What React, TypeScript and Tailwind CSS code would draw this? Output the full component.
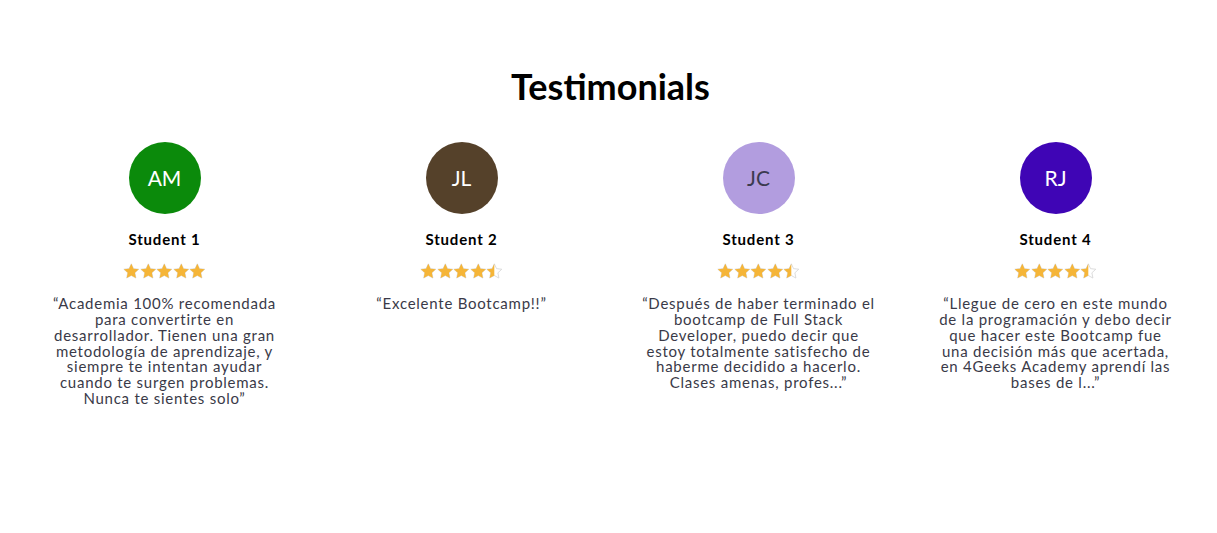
import React from "react";

type T = { initials: string; bg: string; fg: string; name: string; rating: number; text: string };

const data: T[] = [
  { initials: "AM", bg: "bg-[#0b8a0b]", fg: "text-white", name: "Student 1", rating: 5, text: "“Academia 100% recomendada para convertirte en desarrollador. Tienen una gran metodología de aprendizaje, y siempre te intentan ayudar cuando te surgen problemas. Nunca te sientes solo”" },
  { initials: "JL", bg: "bg-[#55412a]", fg: "text-white", name: "Student 2", rating: 4.5, text: "“Excelente Bootcamp!!”" },
  { initials: "JC", bg: "bg-[#b29ddf]", fg: "text-[#3b3b4f]", name: "Student 3", rating: 4.5, text: "“Después de haber terminado el bootcamp de Full Stack Developer, puedo decir que estoy totalmente satisfecho de haberme decidido a hacerlo. Clases amenas, profes...”" },
  { initials: "RJ", bg: "bg-[#3f05b5]", fg: "text-white", name: "Student 4", rating: 4.5, text: "“Llegue de cero en este mundo de la programación y debo decir que hacer este Bootcamp fue una decisión más que acertada, en 4Geeks Academy aprendí las bases de l...”" },
];

const STAR = "M8 0.8l2.2 4.7 5.1.6-3.8 3.5 1 5.1L8 12.2l-4.5 2.5 1-5.1L.7 6.1l5.1-.6z";

function Star({ fill, id }: { fill: number; id: string }) {
  return (
    <svg width="16.6" height="16.4" viewBox="0 0 16 16">
      <defs>
        <clipPath id={id}>
          <rect x="0" y="0" width={16 * fill} height="16" />
        </clipPath>
      </defs>
      <path d={STAR} fill="none" stroke="#d4d4d4" strokeWidth="0.8" />
      <path d={STAR} fill="#f5b538" clipPath={`url(#${id})`} />
    </svg>
  );
}

function Stars({ rating, k }: { rating: number; k: number }) {
  return (
    <div className="flex justify-center">
      {[0, 1, 2, 3, 4].map((i) => (
        <Star key={i} id={`c${k}-${i}`} fill={Math.max(0, Math.min(1, rating - i))} />
      ))}
    </div>
  );
}

export default function App() {
  return (
    <div className="w-full min-h-[533px] bg-white pl-[4px]" style={{ fontFamily: "Lato, 'Noto Sans', sans-serif" }}>
      <h1 className="pt-[65px] text-center text-[36px] leading-[42px] font-bold text-black">Testimonials</h1>
      <div className="mt-[35px] grid grid-cols-4 pl-[12px] pr-[13px]">
        {data.map((t, k) => (
          <div key={k} className="flex flex-col items-center px-[28px]">
            <div className={`w-[72px] h-[72px] rounded-full flex items-center justify-center ${t.bg} ${t.fg} text-[21px]`}>
              {t.initials}
            </div>
            <div className="mt-[15px] text-[15px] leading-[20px] font-bold tracking-[0.8px] text-black">{t.name}</div>
            <div className="mt-[14px]">
              <Stars rating={t.rating} k={k} />
            </div>
            <p className="mt-[17px] text-center text-[15px] leading-[15.7px] tracking-[0.75px] text-[#3a3a48]">{t.text}</p>
          </div>
        ))}
      </div>
    </div>
  );
}
